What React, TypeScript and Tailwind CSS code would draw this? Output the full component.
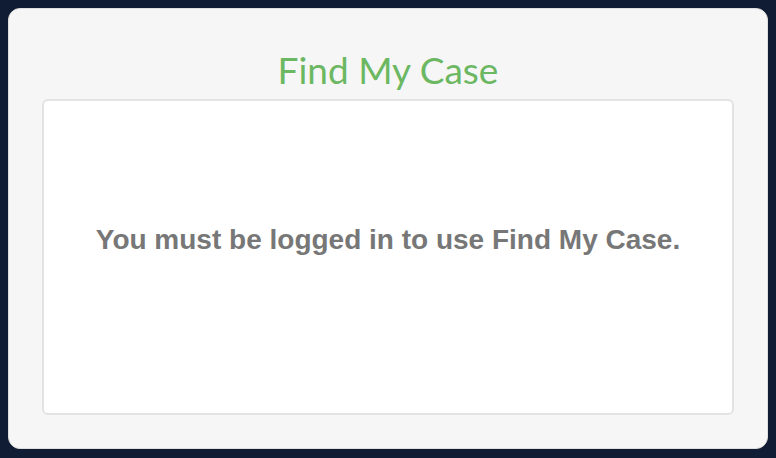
import React from "react";

export default function App() {
  return (
    <div className="w-[776px] h-[458px] bg-[#0f1c33] p-2">
      <div className="h-[441px] w-[760px] rounded-[12px] border border-[#dedede] bg-[#f6f6f6] flex flex-col px-[33px] pb-[33px]">
        <h1 className="pt-[42px] h-[90px] shrink-0 text-center text-[37px] leading-none text-[#6cb862] font-['Lato',sans-serif]">
          Find My Case
        </h1>
        <div className="flex-1 rounded-[6px] border-2 border-[#e3e3e3] bg-white pt-[125px]">
          <p className="text-center text-[28px] leading-none font-bold text-[#777777] font-['Liberation_Sans',Arial,sans-serif]">
            You must be logged in to use Find My Case.
          </p>
        </div>
      </div>
    </div>
  );
}
